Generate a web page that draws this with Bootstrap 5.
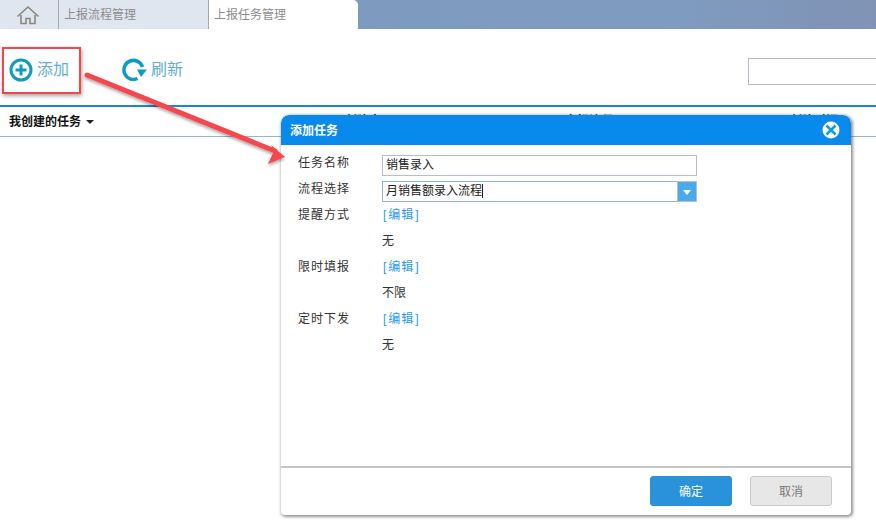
<!DOCTYPE html>
<html lang="zh"><head><meta charset="utf-8"><title>上报任务管理</title>
<link rel="stylesheet" href="https://cdn.jsdelivr.net/npm/bootstrap@5.3.0/dist/css/bootstrap.min.css">
<style>
html,body{width:876px;height:528px;overflow:hidden;background:#fff;font-family:"Liberation Sans","Noto Sans CJK SC",sans-serif;font-size:12px;color:#333}
.page{position:relative;width:876px;height:528px;overflow:hidden}
.tabstrip{height:29px;background:linear-gradient(90deg,#7b97be 0%,#7f9cc0 75%,#8093b5 100%)}
.tabhome{width:58px;background:#e0e6f0;padding-left:16px}
.tabitem{width:150px;background:#e0e6f0;border-left:1px solid #a4a8ae;color:#8c8c8c;font-size:12px;padding:0 0 0 5px;line-height:30px}
.tabitem.on{background:#fff;border-top-right-radius:5px}
.toolzone{border-bottom:2px solid #1c87cd;height:78px;padding:5px 0 0 9px}
.toolbtn{color:#62aed2;font-size:16px;line-height:22px}
.toolbtn span{margin-left:1px}
.addbtn{width:113px}
.searchbox{width:129px;height:27px;border:1px solid #b9b9cb;background:#fff;margin:4px -1px 0 auto}
.headrow{height:30px;border-bottom:1px solid #8fb7d9;padding-left:9px;position:relative;font-weight:700;color:#111;line-height:28px;font-size:12px}
.caretdown{width:0;height:0;border-left:4px solid transparent;border-right:4px solid transparent;border-top:4px solid #222;margin-left:5px}
.headcol{position:absolute;top:6px;line-height:16px;color:#222;font-weight:700}
.redbox{position:absolute;left:2px;top:47px;width:79px;height:47px;border:2px solid #f1484f;box-shadow:1px 2px 4px rgba(0,0,0,.35)}
.arrow{position:absolute;left:0;top:0;z-index:3;pointer-events:none}
.dlg{position:absolute;left:281px;top:115px;width:570px;height:400px;background:#fff;border-radius:8px 8px 4px 4px;box-shadow:1px 1px 3px 1px rgba(60,60,60,.55);z-index:2;overflow:hidden}
.dlghead{height:30px;background:#078aec;color:#fff;font-weight:700;font-size:12px;padding:0 11px 0 9px;border-radius:8px 8px 0 0}
.dlgtitle{margin-top:1px}
.dlgbody{height:321px;padding:5px 0 0 17px}
.frow{height:26px;line-height:26px}
.flabel{width:84px;letter-spacing:1px;color:#333;font-size:12px}
.fval{color:#333;font-size:12px}
.ebox{width:315px;height:21px;border:1px solid #b7bdcc;line-height:19px;padding-left:3px;color:#222;font-size:12px;margin-top:5px}
.ebox.sel{border-color:#8fb3d6;position:relative;padding-right:20px}
.ccaret{display:inline-block;width:1px;height:14px;background:#222;vertical-align:-3px}
.dropbtn{position:absolute;right:-1px;top:-1px;width:20px;height:21px;background:#4aabeb;border:1px solid #b7c0cc}
.dropbtn:after{content:"";position:absolute;left:5px;top:8px;border-left:4px solid transparent;border-right:4px solid transparent;border-top:5px solid #fff}
.elink{color:#2b9af3;text-decoration:none;padding-left:1px;letter-spacing:1px}
.elink span{margin:0 1px 0 1px}
.dlgfoot{height:49px;border-top:2px solid #c6c6c6;padding:8px 19px 0 0}
.okbtn,.nobtn{width:82px;height:30px;font-size:12px;padding:1px 0 0;border-radius:3px;line-height:28px}
.okbtn{background:#2a92da;border:1px solid #2a92da;color:#fff;margin-right:18px}
.nobtn{background:#e7e7e7;border:1px solid #c9c9c9;color:#777}
</style></head><body>
<div class="page">
 <div class="tabstrip d-flex">
  <div class="tabhome d-flex align-items-center"><svg width="24" height="20" viewBox="0 0 24 20" fill="none" stroke="#8a867f" stroke-width="1.600"><path d="M1.500 11.500 12 2l10.500 9.500"/><path d="M5 10v8.500h5v-5h4v5h5V10"/></svg></div>
  <div class="tabitem">上报流程管理</div>
  <div class="tabitem on">上报任务管理</div>
 </div>
 <div class="toolzone d-flex align-items-center">
  <div class="toolbtn addbtn d-flex align-items-center gap-1"><svg width="24" height="24" viewBox="0 0 24 24" fill="none" stroke="#0d9bc4" stroke-width="3"><circle cx="12" cy="12" r="10"/><path d="M6.500 12h11M12 6.500v11"/></svg><span>添加</span></div>
  <div class="toolbtn d-flex align-items-center gap-1"><svg width="25" height="24" viewBox="0 0 25 24" fill="none"><path d="M15.500 20.500A9.500 9.500 0 1 1 20.500 9" stroke="#0d9bc4" stroke-width="3.500"/><path d="M15 11.500h10l-6 7.500z" fill="#0d9bc4"/></svg><span>刷新</span></div>
  <div class="searchbox"></div>
 </div>
 <div class="headrow d-flex align-items-center">我创建的任务<span class="caretdown"></span>
  <span class="headcol" style="left:345px">创建人</span><span class="headcol" style="left:565px">上报流程</span><span class="headcol" style="left:790px">创建时间</span>
 </div>
 <div class="redbox"></div>
 <svg class="arrow" width="876" height="528" viewBox="0 0 876 528"><defs><filter id="sd" x="-10%" y="-10%" width="120%" height="130%"><feDropShadow dx="0" dy="2" stdDeviation="1.500" flood-color="#000" flood-opacity=".35"/></filter></defs><g filter="url(#sd)"><path d="M87 75 275 151" stroke="#f5474d" stroke-width="5" stroke-linecap="round"/><path d="M268 164 285 157 271 145 274 151z" fill="#f5474d"/></g></svg>
 <div class="dlg">
  <div class="dlghead d-flex align-items-center justify-content-between"><span class="dlgtitle">添加任务</span>
   <svg width="18" height="18" viewBox="0 0 18 18"><circle cx="9" cy="9" r="8.500" fill="#fff"/><path d="M4.500 4.500l9 9M13.500 4.500l-9 9" stroke="#0f9be0" stroke-width="2.500"/></svg></div>
  <div class="dlgbody">
   <div class="frow d-flex"><div class="flabel">任务名称</div><div class="ebox">销售录入</div></div>
   <div class="frow d-flex"><div class="flabel">流程选择</div><div class="ebox sel">月销售额录入流程<span class="ccaret"></span><span class="dropbtn"></span></div></div>
   <div class="frow d-flex"><div class="flabel">提醒方式</div><a class="elink" href="#">[<span>编辑</span>]</a></div>
   <div class="frow d-flex"><div class="flabel"></div><div class="fval">无</div></div>
   <div class="frow d-flex"><div class="flabel">限时填报</div><a class="elink" href="#">[<span>编辑</span>]</a></div>
   <div class="frow d-flex"><div class="flabel"></div><div class="fval">不限</div></div>
   <div class="frow d-flex"><div class="flabel">定时下发</div><a class="elink" href="#">[<span>编辑</span>]</a></div>
   <div class="frow d-flex"><div class="flabel"></div><div class="fval">无</div></div>
  </div>
  <div class="dlgfoot d-flex justify-content-end"><button class="btn okbtn" type="button">确定</button><button class="btn nobtn" type="button">取消</button></div>
 </div>
</div>
<script src="https://cdn.jsdelivr.net/npm/bootstrap@5.3.0/dist/js/bootstrap.bundle.min.js"></script>
</body></html>
